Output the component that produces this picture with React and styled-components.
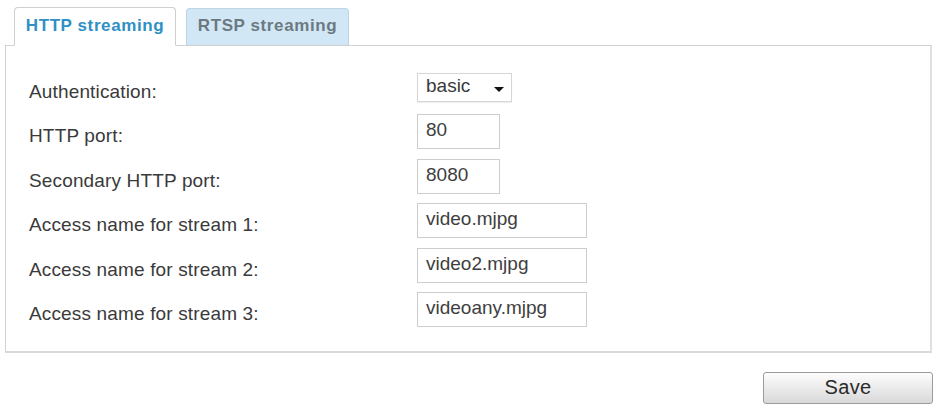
import React from "react";
import styled, { createGlobalStyle } from "styled-components";

const GlobalStyle = createGlobalStyle`
  html, body { margin: 0; padding: 0; background: #ffffff; }
  body { font-family: "Liberation Sans", Arial, sans-serif; }
`;

const Page = styled.div`
  width: 937px;
  height: 404px;
  box-sizing: border-box;
  padding: 7px 5px 0 5px;
  overflow: hidden;
`;

const TabBar = styled.div`
  display: flex;
  align-items: flex-end;
  gap: 10px;
  padding-left: 9px;
  margin-bottom: -1px;
  position: relative;
  z-index: 1;
`;

const Tab = styled.div`
  box-sizing: border-box;
  height: ${(p) => (p.$active ? "39px" : "38px")};
  width: ${(p) => (p.$active ? "162px" : "163px")};
  display: flex;
  align-items: center;
  justify-content: center;
  padding-bottom: 2px;
  border: 1px solid ${(p) => (p.$active ? "#cfcfcf" : "#bcd5e5")};
  border-bottom-color: ${(p) => (p.$active ? "#ffffff" : "#cfcfcf")};
  border-radius: 4px 4px 0 0;
  background: ${(p) => (p.$active ? "#ffffff" : "#d1e7f6")};
  color: ${(p) => (p.$active ? "#2e90c6" : "#6d7980")};
  font-size: 17px;
  font-weight: bold;
  letter-spacing: 0.6px;
  white-space: nowrap;
`;

const Panel = styled.div`
  box-sizing: border-box;
  width: 927px;
  height: 308px;
  border: 1px solid #d2d2d2;
  border-bottom: 2px solid #dadada;
  border-right: 2px solid #e0e0e0;
  padding: 24px 0 0 23px;
`;

const Form = styled.div`
  display: grid;
  grid-template-columns: 388px auto;
  grid-auto-rows: 35px;
  row-gap: 9.4px;
  align-items: center;
`;

const Label = styled.div`
  font-size: 19px;
  color: #3a3a3a;
  padding-top: 9px;
  letter-spacing: 0.15px;
  white-space: nowrap;
`;

const TextBox = styled.div`
  box-sizing: border-box;
  height: 35px;
  width: ${(p) => (p.$wide ? "170px" : "83px")};
  border: 1px solid #cdcdcd;
  padding: 0 0 3px 8px;
  display: flex;
  align-items: center;
  font-size: 19px;
  color: #3e3e3e;
  background: #fff;
`;

const Select = styled.div`
  box-sizing: border-box;
  height: 29px;
  width: 95px;
  border: 1px solid #d6d6d6;
  box-shadow: 0 1px 1px rgba(0, 0, 0, 0.06);
  padding: 0 7px 3px 8px;
  display: flex;
  align-items: center;
  justify-content: space-between;
  font-size: 19px;
  color: #3a3a3a;
  background: #fff;
`;

const Caret = styled.span`
  width: 0;
  height: 0;
  margin-top: 6px;
  border-left: 5px solid transparent;
  border-right: 5px solid transparent;
  border-top: 5px solid #111;
`;

const Actions = styled.div`
  display: flex;
  justify-content: flex-end;
  margin-top: 19px;
  margin-right: -1px;
`;

const Button = styled.button`
  box-sizing: border-box;
  width: 170px;
  height: 32px;
  border: 1px solid #9c9c9c;
  border-radius: 3px;
  background: linear-gradient(#fdfdfd, #e9e9e9 55%, #d9d9d9);
  font-family: "Liberation Sans", Arial, sans-serif;
  font-size: 20px;
  color: #2a2a2a;
  letter-spacing: 0.4px;
  padding: 0 0 2px;
`;

const rows = [
  { label: "Authentication:", type: "select", value: "basic" },
  { label: "HTTP port:", value: "80" },
  { label: "Secondary HTTP port:", value: "8080" },
  { label: "Access name for stream 1:", value: "video.mjpg", wide: true },
  { label: "Access name for stream 2:", value: "video2.mjpg", wide: true },
  { label: "Access name for stream 3:", value: "videoany.mjpg", wide: true },
];

export default function App() {
  return (
    <Page>
      <GlobalStyle />
      <TabBar>
        <Tab $active>HTTP streaming</Tab>
        <Tab>RTSP streaming</Tab>
      </TabBar>
      <Panel>
        <Form>
          {rows.map((r) => (
            <React.Fragment key={r.label}>
              <Label>{r.label}</Label>
              {r.type === "select" ? (
                <Select>
                  <span>{r.value}</span>
                  <Caret />
                </Select>
              ) : (
                <TextBox $wide={r.wide}>{r.value}</TextBox>
              )}
            </React.Fragment>
          ))}
        </Form>
      </Panel>
      <Actions>
        <Button>Save</Button>
      </Actions>
    </Page>
  );
}
